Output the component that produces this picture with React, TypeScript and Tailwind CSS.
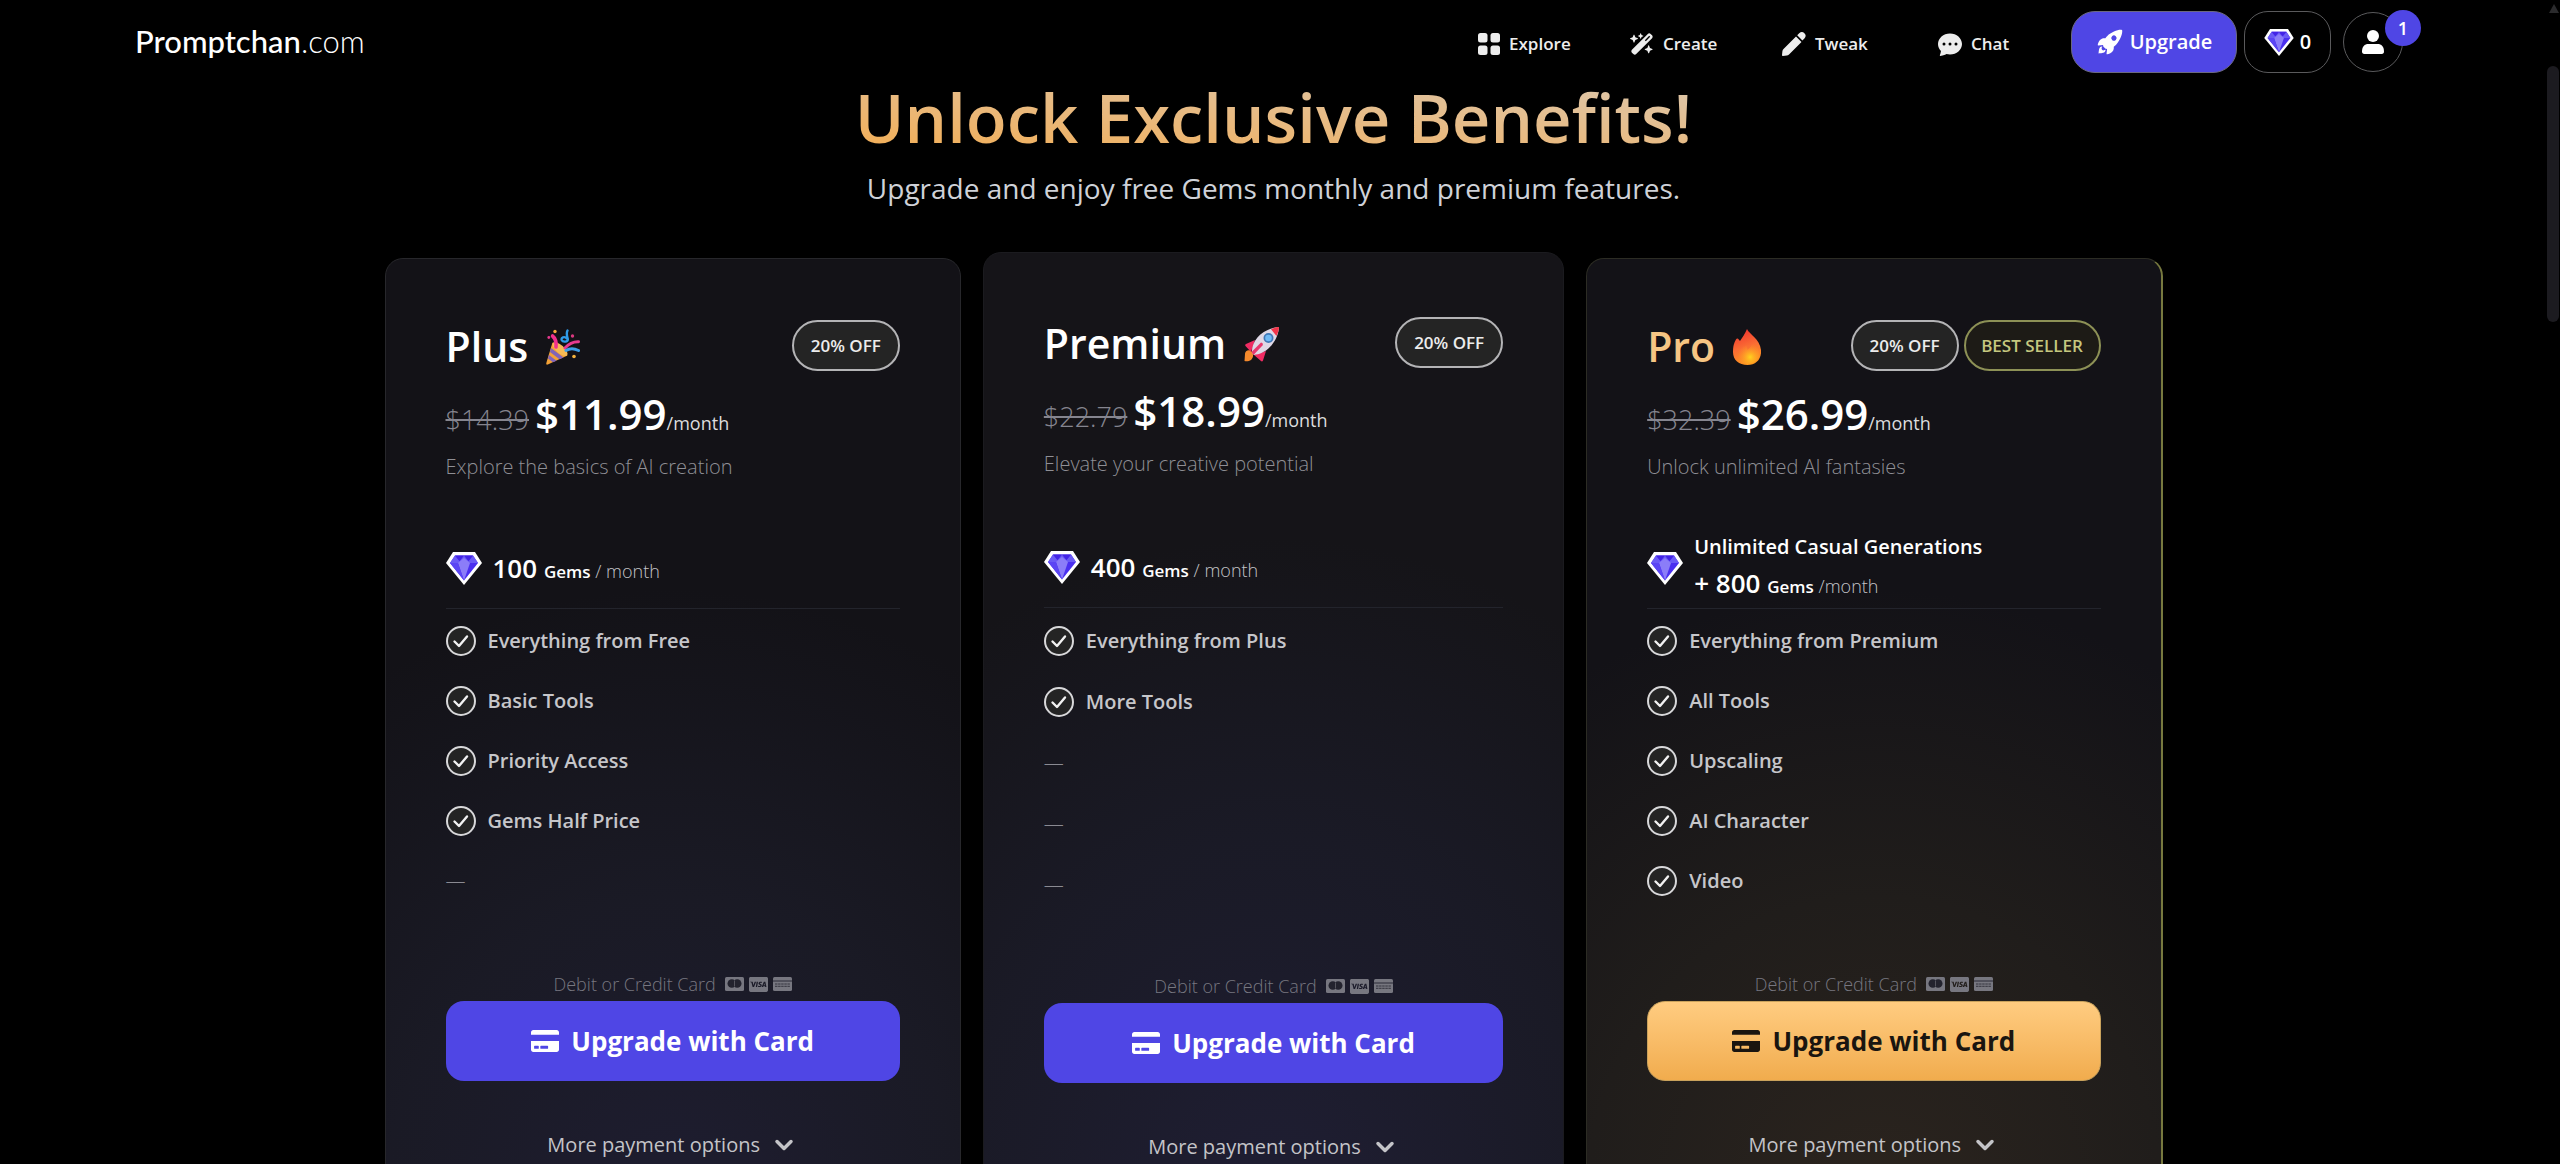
import { FaCcVisa, FaCreditCard } from "react-icons/fa";
import { FaWandMagicSparkles } from "react-icons/fa6";
import { IoRocketSharp } from "react-icons/io5";
import { FiChevronDown } from "react-icons/fi";
import { BsChatDotsFill } from "react-icons/bs";
import type { ReactNode } from "react";

const navItems = [
  { name: "Explore", icon: <GridIcon />, width: "w-[152px]" },
  { name: "Create", icon: <FaWandMagicSparkles className="size-6" />, width: "w-[152px]" },
  { name: "Tweak", icon: <PencilIcon />, width: "w-[156px]" },
  { name: "Chat", icon: <BsChatDotsFill className="size-6" />, width: "w-[133px]" },
];

type Plan = {
  name: string;
  emoji: ReactNode;
  oldPrice: string;
  price: string;
  description: string;
  headline?: string;
  gems: string;
  features: (string | null)[];
  variant: "plus" | "premium" | "pro";
};

const plans: Plan[] = [
  {
    name: "Plus",
    emoji: <PartyIcon />,
    oldPrice: "$14.39",
    price: "$11.99",
    description: "Explore the basics of AI creation",
    gems: "100",
    features: ["Everything from Free", "Basic Tools", "Priority Access", "Gems Half Price", null],
    variant: "plus",
  },
  {
    name: "Premium",
    emoji: <RocketEmoji />,
    oldPrice: "$22.79",
    price: "$18.99",
    description: "Elevate your creative potential",
    gems: "400",
    features: ["Everything from Plus", "More Tools", null, null, null],
    variant: "premium",
  },
  {
    name: "Pro",
    emoji: <FireIcon />,
    oldPrice: "$32.39",
    price: "$26.99",
    description: "Unlock unlimited AI fantasies",
    headline: "Unlimited Casual Generations",
    gems: "800",
    features: ["Everything from Premium", "All Tools", "Upscaling", "AI Character", "Video"],
    variant: "pro",
  },
];

const cardStyles = {
  plus: "mt-[6px] pt-[61px] border-[#27272b] bg-[radial-gradient(ellipse_100%_65%_at_50%_100%,#1e1d30_0%,#1a1a25_50%,#131217_100%)]",
  premium:
    "pt-16 border-[#1b1b1f] bg-[radial-gradient(ellipse_100%_70%_at_50%_100%,#1f1e33_0%,#1a1a26_55%,#151418_100%)]",
  pro: "mt-[6px] pt-[61px] border-[#2c2c24] border-r-2 border-r-[#77793f] bg-[radial-gradient(ellipse_100%_65%_at_50%_100%,#2b241e_0%,#201d1b_50%,#131217_100%)]",
};

function GridIcon() {
  return (
    <svg viewBox="0 0 22 22" className="size-[22px]" fill="currentColor" aria-hidden="true">
      <rect x="0" y="0" width="9.5" height="9.5" rx="2.5" />
      <rect x="12.5" y="0" width="9.5" height="9.5" rx="2.5" />
      <rect x="0" y="12.5" width="9.5" height="9.5" rx="2.5" />
      <rect x="12.5" y="12.5" width="9.5" height="9.5" rx="2.5" />
    </svg>
  );
}

function PencilIcon() {
  return (
    <svg viewBox="0 0 24 24" className="size-6" fill="currentColor" aria-hidden="true">
      <path d="M14 4.500l5.500 5.500L7 22.500c-.6.600-1.300 1-2.200 1.100L.8 24C.3 24 0 23.700 0 23.200l.4-4c.1-.9.500-1.600 1.100-2.200z" />
      <path d="M15.200 3.300l2-2c1.700-1.700 3.600-1.700 5.200-.1 1.700 1.700 1.700 3.500 0 5.200l-2 2z" />
    </svg>
  );
}

function UserIcon() {
  return (
    <svg viewBox="0 0 22 24" className="h-6 w-[22px]" fill="currentColor" aria-hidden="true">
      <circle cx="11" cy="6" r="6" />
      <path d="M0 21.500C0 16.500 2.500 14 6.500 14h9c4 0 6.500 2.500 6.500 7.500 0 1.500-.8 2.500-2.300 2.500H2.300C.8 24 0 23 0 21.500z" />
    </svg>
  );
}

function GemIcon({ className }: { className: string }) {
  return (
    <svg viewBox="0 0 36 33" className={className} aria-hidden="true">
      <path d="M7 0h22l7 11-18 22L0 11z" fill="#fff" />
      <path d="M9 3.5h18l5 7.5-14 17.5L4 11z" fill="#4a2ff0" />
      <path d="M4 11l5-7.5 4.5 5.5L18 3.5 22.5 9 27 3.5l5 7.5z" fill="#6a5af5" />
      <path d="M9 3.5h9L13.5 9zM18 3.5h9L22.5 9z" fill="#4324e6" />
      <path d="M12 11l6-5 6 5-6 17.5z" fill="#8b7df8" />
      <path d="M4 11h8l6 17.5z" fill="#5b45f4" />
    </svg>
  );
}

function MastercardIcon() {
  return (
    <svg viewBox="0 0 19 14" className="h-[14px] w-[19px]" aria-hidden="true">
      <rect width="19" height="14" rx="1.5" fill="currentColor" />
      <circle cx="6.800" cy="6.500" r="4.300" fill="#23232e" />
      <circle cx="12.200" cy="6.500" r="4.300" fill="#23232e" />
      <path d="M9.500 3.500v6" stroke="currentColor" strokeWidth="0.600" />
    </svg>
  );
}

function StripedCardIcon() {
  return (
    <svg viewBox="0 0 19 14" className="h-[14px] w-[19px]" aria-hidden="true">
      <rect width="19" height="14" rx="1.5" fill="currentColor" />
      <path d="M0 4h19" stroke="#2b2b36" strokeWidth="1" />
      <path d="M2 7h15M2 9.300h15" stroke="#2b2b36" strokeWidth="0.900" strokeDasharray="2.500 0.600" />
    </svg>
  );
}

function PartyIcon() {
  return (
    <svg viewBox="0 0 34 36" className="h-9 w-[34px]" aria-hidden="true">
      <path d="M6.5 13.5L21.5 26.500 1.800 35.500C.6 36 0 35.200.3 34z" fill="#f3a136" />
      <path d="M5 19l12.500 9.500-4 1.800-9.500-7.300zM3 26l7.500 5.700-3.500 1.600-5-3.800z" fill="#8064b8" />
      <ellipse cx="14" cy="20" rx="4" ry="9.500" transform="rotate(-48 14 20)" fill="#f5b955" />
      <path d="M6.500 7c2.500 2 4 6 3.500 11" fill="none" stroke="#f0308c" strokeWidth="3.600" strokeLinecap="round" />
      <path d="M19 19c4-4.500 8-6.500 13.500-6.300" fill="none" stroke="#e63a90" strokeWidth="3" strokeLinecap="round" />
      <path d="M20 21.500c4-2.500 8-2.300 12.500 0" fill="none" stroke="#3d9de6" strokeWidth="3" strokeLinecap="round" />
      <path d="M21.500 1.500c-1.500 3-.5 6 .3 8.500.5 3-4.800 3.500-6 1.200-1-2.300 2.500-4.500 5-1.700" fill="none" stroke="#2f9be8" strokeWidth="2.400" strokeLinecap="round" />
      <circle cx="9" cy="2.500" r="1.700" fill="#f5a83b" />
      <circle cx="2.800" cy="8.500" r="1.400" fill="#e6388e" />
      <circle cx="26.500" cy="7" r="1.700" fill="#d9387f" />
      <circle cx="28" cy="27.500" r="1.800" fill="#f5b23c" />
    </svg>
  );
}

function RocketEmoji() {
  return (
    <svg viewBox="0 0 36 36" className="size-9" aria-hidden="true">
      <path d="M1 28c0-4 5-5 7-2s1 6-1 8c-2 1.500-5 1.500-6.500 1z" fill="#f58a2c" />
      <path d="M11 14L2 18c-1 .6-1 1.400-.5 2L7 26zM22 25l-3 9.500c-.4 1-1.300 1.300-2 .5L10 29z" fill="#ef2c63" />
      <path d="M8 27C7 15 18 3 34 1c.8 0 1.200.5 1 1.300C33 17 22 28 10 29z" fill="#dfd8e6" />
      <path d="M27 3.300C29.500 2 32 1.200 34 1c.8 0 1.200.5 1 1.300-.4 2.700-1.300 5.200-2.500 7.600z" fill="#f2354a" />
      <circle cx="24.500" cy="12" r="5" fill="#3f78b8" />
      <circle cx="24.500" cy="12" r="3.300" fill="#6fb9f5" />
      <path d="M7.500 26L17 16.500c2 .5 2.300 1.700 1.500 3L9.500 29z" fill="#e8386e" />
    </svg>
  );
}

function FireIcon() {
  return (
    <svg viewBox="0 0 28 36" className="h-9 w-7" aria-hidden="true">
      <defs>
        <linearGradient id="flame" x1="0.300" y1="0" x2="0.600" y2="1">
          <stop offset="0" stopColor="#f0322f" />
          <stop offset="0.500" stopColor="#fa6d33" />
          <stop offset="1" stopColor="#ff9a1f" />
        </linearGradient>
        <radialGradient id="core" cx="0.600" cy="0.700" r="0.600">
          <stop offset="0" stopColor="#ffd21f" />
          <stop offset="1" stopColor="#ff8f26" stopOpacity="0" />
        </radialGradient>
      </defs>
      <path d="M14 0c2 5 13 10 14 21 .8 9-5 15-13.500 15S0 31 0 23c0-6 1-9 3-12.500.7-1.500 2-1.500 2.700 0L7 12C9 9 12 5 14 0z" fill="url(#flame)" />
      <path d="M20 12c3 5 6 7 6 13 0 6-5 10-11.500 10S4 31 4 26c0-6 6-7 9-10 1 2 1.500 3 1.500 5 2.500-2 5-5 5.500-9z" fill="url(#core)" />
    </svg>
  );
}

function CheckIcon() {
  return (
    <svg viewBox="0 0 30 30" className="size-[30px] shrink-0" fill="none" aria-hidden="true">
      <circle cx="15" cy="15" r="14" fill="#242424" stroke="#d8d8da" strokeWidth="2" />
      <path d="M8.500 15.500l4.500 4.500 8-9.500" stroke="#f2f2f2" strokeWidth="2.400" strokeLinecap="round" strokeLinejoin="round" />
    </svg>
  );
}

function Header() {
  return (
    <header className="flex h-21 items-center justify-between pr-[144px] pl-[135px]">
      <a href="#" className="pb-[2px] font-['Lato',sans-serif] text-[31px] leading-8 font-medium text-white">
        Promptchan<span className="font-light">.com</span>
      </a>
      <div className="flex items-center">
        <nav className="flex pt-[3px]">
          {navItems.map((item) => (
            <a
              key={item.name}
              href="#"
              className={`flex items-center gap-[9px] text-[17px] font-semibold text-[#ededed] ${item.width}`}
            >
              {item.icon}
              {item.name}
            </a>
          ))}
        </nav>
        <button className="flex h-[62px] w-[166px] items-center justify-center gap-[6px] rounded-[24px] border border-[#6b6880] bg-[#4f46e5] text-[20px] font-semibold text-white">
          <IoRocketSharp className="size-7" />
          Upgrade
        </button>
        <button className="ml-[7px] flex h-[62px] w-[87px] items-center justify-center gap-[6px] rounded-[24px] border border-[#5a5a5c] text-[20px] font-semibold text-white">
          <GemIcon className="h-[27px] w-[30px]" />0
        </button>
        <button aria-label="Account" className="relative ml-[12px] flex size-15 items-center justify-center rounded-full border border-[#5a5a5c] text-white">
          <UserIcon />
          <span className="absolute -top-[3px] -right-[19px] flex size-9 items-center justify-center rounded-full bg-[#4f46e5] text-[18px] font-semibold">
            1
          </span>
        </button>
      </div>
    </header>
  );
}

function Gems({ plan }: { plan: Plan }) {
  return (
    <div className="flex h-20 items-center gap-[11px]">
      <GemIcon className="h-[33px] w-9 shrink-0" />
      <div className={`text-white ${plan.headline ? "pb-[6px]" : ""}`}>
        {plan.headline && <p className="text-[20px] leading-9 font-semibold">{plan.headline}</p>}
        <p className="text-[26px] leading-9 font-semibold">
          {plan.headline && "+ "}
          {plan.gems} <span className="text-[17px] leading-none">Gems</span>{" "}
          <span className="-ml-[2px] text-[18px] leading-none font-light text-[#c4c4c8]">
            {plan.headline ? "/month" : "/ month"}
          </span>
        </p>
      </div>
    </div>
  );
}

function PlanCard({ plan }: { plan: Plan }) {
  const pro = plan.variant === "pro";
  const premium = plan.variant === "premium";
  return (
    <article className={`flex flex-col rounded-[18px] border px-[60px] pb-10 ${cardStyles[plan.variant]}`}>
      <div className="flex h-[51px] items-center justify-between">
        <h2 className={`flex items-center gap-[18px] pt-[2px] text-[41px] leading-[51px] font-semibold ${pro ? "text-[#f6c583]" : "text-white"}`}>
          {plan.name}
          {plan.emoji}
        </h2>
        <div className="flex gap-[5px]">
          <span className="flex h-[51px] w-[108px] items-center justify-center rounded-[26px] border-2 border-[#b4b4b6] bg-[#242424] text-[17px] font-semibold text-[#ececec]">
            20% OFF
          </span>
          {pro && (
            <span className="flex h-[51px] w-[137px] items-center justify-center rounded-[26px] border-2 border-[#8d9156] bg-[#1d1b16] text-[17px] font-semibold text-[#c5c77f]">
              BEST SELLER
            </span>
          )}
        </div>
      </div>
      <p className="mt-[15px] text-[42px] leading-14 font-semibold text-white">
        <s className="mr-[6px] text-[27px] leading-none font-light text-[#85858f]">{plan.oldPrice}</s>
        {plan.price}
        <span className="text-[18px] leading-none font-normal text-[#dcdcde]">/month</span>
      </p>
      <p className="mt-[11px] text-[20px] leading-7 font-light text-[#8f8f95]">{plan.description}</p>
      <div className={`border-b border-[#23242c] ${premium ? "mt-[49px]" : "mt-[47px]"}`}>
        <Gems plan={plan} />
      </div>
      <ul className="pt-[2px]">
        {plan.features.map((feature, i) => (
          <li
            key={i}
            className={`flex items-center gap-3 text-[20px] font-semibold text-[#c6c6ca] ${premium ? "h-[61px]" : "h-15"}`}
          >
            {feature ? (
              <>
                <CheckIcon />
                {feature}
              </>
            ) : (
              <span className="font-light text-[#8a8a92]">—</span>
            )}
          </li>
        ))}
      </ul>
      <p
        className={`flex items-center justify-center gap-[5px] text-[18px] leading-6 font-light text-[#777780] ${
          premium ? "mt-[59px]" : "mt-[61px]"
        }`}
      >
        <span className="pr-1">Debit or Credit Card</span>
        <MastercardIcon />
        <FaCcVisa className="size-[19px]" />
        <StripedCardIcon />
      </p>
      <button
        className={`mt-[5px] flex h-20 items-center justify-center gap-3 rounded-[18px] text-[26px] font-bold ${
          pro ? "border border-[#c9a25c] bg-linear-to-b from-[#ffcc80] to-[#f1ac4d] text-[#1a1510]" : "bg-[#4f46e5] text-white"
        }`}
      >
        <FaCreditCard className="size-7" />
        Upgrade with Card
      </button>
      <button className="mt-12 flex items-center justify-center gap-[10px] text-[20px] leading-8 text-[#c4c4c8]">
        More payment options
        <FiChevronDown className="size-7" strokeWidth={3} />
      </button>
    </article>
  );
}

export default function App() {
  return (
    <div className="flex h-screen overflow-hidden bg-black font-['Open_Sans',sans-serif]">
      <div className="min-w-0 flex-1">
        <Header />
        <main className="mx-auto max-w-[1778px]">
          <h1 className="mx-auto w-fit bg-linear-to-tr from-[#f2ae55] to-[#dcc6aa] bg-clip-text text-[67px] leading-[66px] font-semibold text-transparent">
            Unlock Exclusive Benefits!
          </h1>
          <p className="mt-4 text-center text-[28px] leading-11 text-[#cfd2d8]">
            Upgrade and enjoy free Gems monthly and premium features.
          </p>
          <section className="mt-[42px] grid grid-cols-[577fr_582fr_577fr] gap-[22px]">
            {plans.map((plan) => (
              <PlanCard key={plan.name} plan={plan} />
            ))}
          </section>
        </main>
      </div>
      <div className="w-[13px] shrink-0 pt-1" aria-hidden="true">
        <div className="mx-auto h-0 w-0 border-x-[5px] border-b-[9px] border-x-transparent border-b-[#2b2b2d]" />
        <div className="mt-[53px] h-64 w-3 rounded-full bg-[#1c1b20]" />
      </div>
    </div>
  );
}
